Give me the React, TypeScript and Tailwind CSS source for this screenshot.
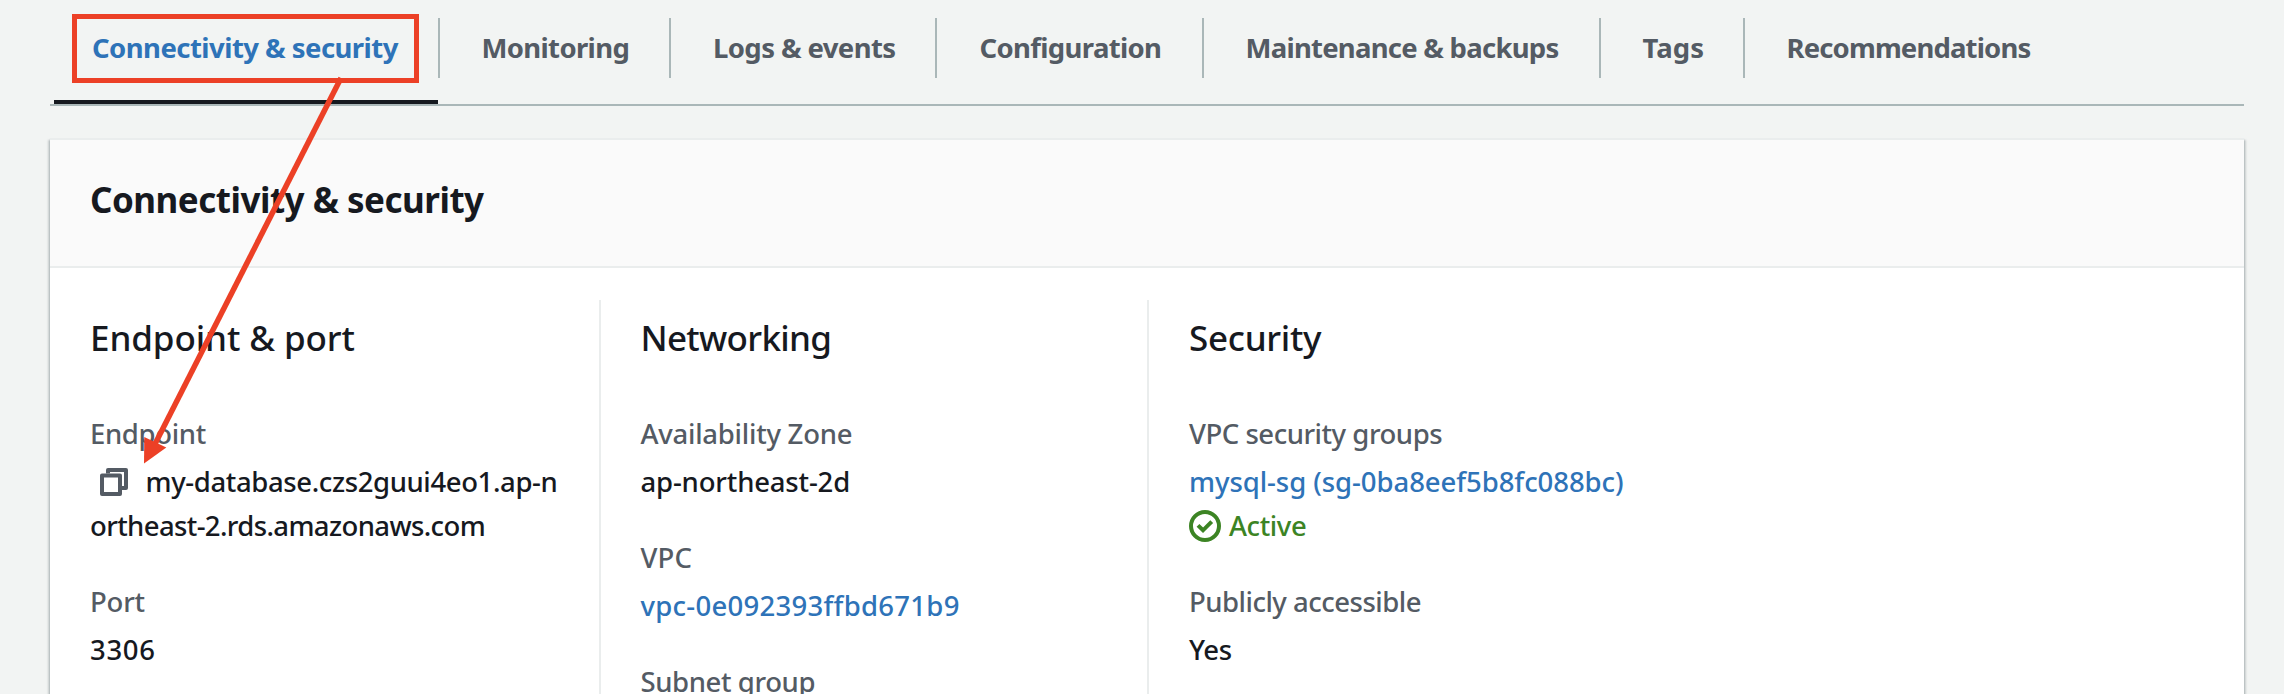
import type { ReactNode } from 'react';

const tabs = [
  { label: 'Monitoring', style: 'w-[231px] pl-[41.5px] tracking-[-0.65px]' },
  { label: 'Logs & events', style: 'w-[266px] pl-[42px] tracking-[-0.6px]' },
  { label: 'Configuration', style: 'w-[267px] pl-[42.5px] tracking-[-0.65px]' },
  { label: 'Maintenance & backups', style: 'w-[397px] pl-[41.5px] tracking-[-0.75px]' },
  { label: 'Tags', style: 'w-[144px] pl-[41.5px] tracking-[0.1px]' },
];

function Field({ label, tracking = '', children }: { label: string; tracking?: string; children?: ReactNode }) {
  return (
    <div className="mb-8 flex flex-col gap-1">
      <div className={`text-[#545b64] ${tracking}`}>{label}</div>
      <div>{children}</div>
    </div>
  );
}

function Column({ title, style, children }: { title: string; style: string; children: ReactNode }) {
  return (
    <div className={`h-[410px] shrink-0 pt-4 whitespace-nowrap ${style}`}>
      <h3 className="mb-[52px] text-[35px]">{title}</h3>
      <div className="tracking-normal">{children}</div>
    </div>
  );
}

function CopyIcon() {
  return (
    <svg className="ml-[10px] mr-[17.5px] h-7 w-7" viewBox="0 0 28 28" fill="none" stroke="#545b64" strokeWidth="4" strokeLinejoin="round">
      <path d="M8 5.5V2h18v18h-4" />
      <rect x="2" y="7.5" width="18" height="18.5" />
    </svg>
  );
}

function ActiveIcon() {
  return (
    <svg className="mr-2 h-8 w-8" viewBox="0 0 32 32" fill="none" stroke="#3c8424" strokeWidth="4">
      <circle cx="16" cy="16" r="14" />
      <path d="M9 15.4l5 4.9 8.7-8.7" />
    </svg>
  );
}

export default function App() {
  return (
    <div className="relative h-[694px] w-[2284px] overflow-hidden bg-[#f2f4f3] font-['Noto_Sans',sans-serif] text-[27.5px] leading-[44px] font-medium text-[#16191f]">
      <nav className="mr-10 ml-[50px] flex h-[106px] border-b-2 border-[#aab7b8] pl-1 pt-[18px] font-bold leading-[60px] whitespace-nowrap text-[#545b64]">
        <div className="flex h-[86px] w-[384px] border-b-4 border-[#16191f] pl-[38px] tracking-[-0.54px] text-[#2e73b8]">
          Connectivity &amp; security
        </div>
        <div className="h-[60px] w-[2px] bg-[#aab7b8]" />
        {tabs.map((t) => (
          <div key={t.label} className={`h-[60px] border-r-2 border-[#aab7b8] ${t.style}`}>{t.label}</div>
        ))}
        <div className="pl-[41.5px] tracking-[-0.85px]">Recommendations</div>
      </nav>

      <section className="mt-8 mr-10 ml-[50px] h-[600px] bg-white shadow-[0_2px_2px_0_rgba(0,28,36,0.3),2px_2px_2px_0_rgba(0,28,36,0.15),-2px_2px_2px_0_rgba(0,28,36,0.15)]">
        <header className="h-[130px] border-y-2 border-[#eaeded] bg-[#fafafa] pt-[38px] pl-10">
          <h2 className="text-[35px] font-bold tracking-[-0.5px]">Connectivity &amp; security</h2>
        </header>
        <div className="flex pt-8">
          <Column title="Endpoint & port" style="w-[551px] border-r-2 border-[#eaeded] pl-10 tracking-[-0.1px]">
            <Field label="Endpoint" tracking="tracking-[-0.35px]">
              <div className="flex items-center tracking-[-0.38px]">
                <CopyIcon />
                my-database.czs2guui4eo1.ap-n
              </div>
              <div className="tracking-[-0.62px]">ortheast-2.rds.amazonaws.com</div>
            </Field>
            <Field label="Port" tracking="tracking-[-0.2px]">
              <span className="tracking-[0.7px]">3306</span>
            </Field>
          </Column>
          <Column title="Networking" style="w-[548px] border-r-2 border-[#eaeded] pl-[39.5px] tracking-[-0.7px]">
            <Field label="Availability Zone" tracking="tracking-[-0.25px]">
              <span className="tracking-[-0.17px]">ap-northeast-2d</span>
            </Field>
            <Field label="VPC" tracking="tracking-[0.2px]">
              <span className="tracking-[0.27px] text-[#2e73b8]">vpc-0e092393ffbd671b9</span>
            </Field>
            <Field label="Subnet group" tracking="tracking-[-0.4px]" />
          </Column>
          <Column title="Security" style="pl-10 tracking-[-0.3px]">
            <Field label="VPC security groups" tracking="tracking-[-0.47px]">
              <div className="tracking-[-0.06px] text-[#2e73b8]">mysql-sg (sg-0ba8eef5b8fc088bc)</div>
              <div className="flex items-center tracking-[-0.4px] text-[#3c8424]">
                <ActiveIcon />
                Active
              </div>
            </Field>
            <Field label="Publicly accessible" tracking="tracking-[-0.5px]">
              <span className="tracking-[-0.4px]">Yes</span>
            </Field>
          </Column>
        </div>
      </section>

      <div className="absolute top-[14px] left-[72px] h-[69px] w-[347px] border-[5px] border-[#ec4026]" />
      <svg className="pointer-events-none absolute top-0 left-0 h-[694px] w-[600px]" viewBox="0 0 600 694">
        <path d="M341 78L155 444" stroke="#ec4026" strokeWidth="5.5" />
        <path d="M144 463.5L144.3 437L166.3 447.5Z" fill="#ec4026" />
      </svg>
    </div>
  );
}
